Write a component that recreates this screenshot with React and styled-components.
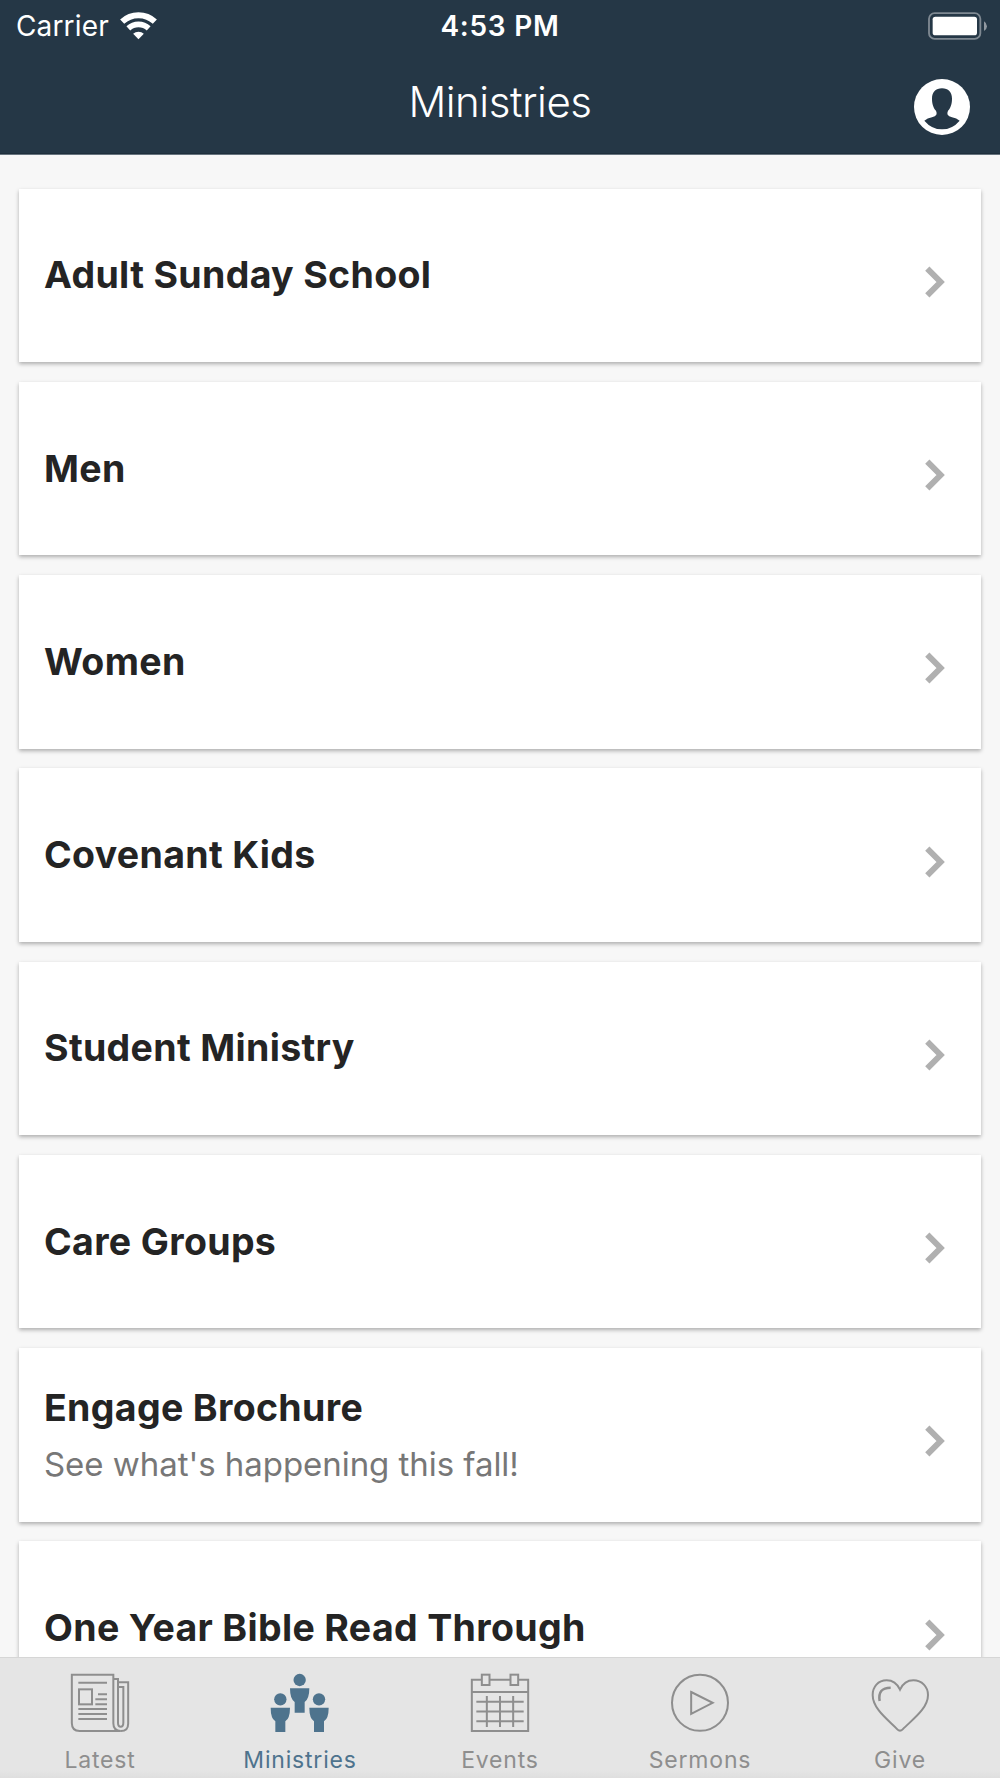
import React from 'react'
import styled, { createGlobalStyle } from 'styled-components'

const ministries = [
  { title: 'Adult Sunday School' },
  { title: 'Men' },
  { title: 'Women' },
  { title: 'Covenant Kids' },
  { title: 'Student Ministry' },
  { title: 'Care Groups' },
  { title: 'Engage Brochure', blurb: "See what's happening this fall!" },
  { title: 'One Year Bible Read Through' }
]

const WifiIcon = () => (
  <svg width="37" height="28" viewBox="-55.5 -82 111 84" fill="none" stroke="#fff">
    <path d="M-49-53A72 72 0 0 1 49-53" strokeWidth="18" />
    <path d="M-30.5-33A45 45 0 0 1 30.5-33" strokeWidth="17" />
    <path d="M0 0L-16-17A24 24 0 0 1 16-17Z" fill="#fff" stroke="none" />
  </svg>
)

const BatteryIcon = () => (
  <svg width="60" height="28" viewBox="0 0 180 84">
    <rect x="3" y="3.5" width="154" height="77" rx="17" fill="none" stroke="#7f8992" strokeWidth="5.500" />
    <rect x="14" y="14" width="133" height="56" rx="8" fill="#fff" />
    <path d="M168 28Q177 34 177 42.500T168 57Z" fill="#9199a1" />
  </svg>
)

const ProfileIcon = () => (
  <svg width="56" height="56" viewBox="0 0 168 168">
    <circle cx="84" cy="84" r="84" fill="#fff" />
    <path
      d="M84 28C65 28 54 39 54 59C54 77 60 89 66 95Q69 101 67 107Q64 112 54 115Q40 118 31 125Q53 151 84 151T137 125Q128 118 114 115Q104 112 101 107Q99 101 102 95C108 89 114 77 114 59C114 39 103 28 84 28Z"
      fill="#253746"
    />
  </svg>
)

const Chevron = () => (
  <svg width="20" height="32" viewBox="0 0 20 32" fill="none">
    <path d="M2.300 2.700L15.600 16L2.300 29.300" stroke="#b0b0b0" strokeWidth="6" />
  </svg>
)

const LatestIcon = () => (
  <svg width="60" height="60" viewBox="90 69 180 180" fill="none" stroke="currentColor" strokeWidth="6">
    <path d="M95.500 74H220V220Q220 243 242.500 243H119Q95.500 243 95.500 219Z" />
    <path d="M220 87H234V218Q234 230 242 230T250 218V111H234M234 97H264.500V221Q264.500 243 242.500 243" />
    <rect x="117" y="118" width="39" height="45" />
    <path d="M115 98H201M174 133H201M166 148H201M166 163H201M115 177H201M115 192H201M115 207H201" />
  </svg>
)

const MinistriesIcon = () => (
  <svg width="60" height="60" viewBox="120 69 180 180" fill="currentColor">
    <circle cx="209" cy="90" r="18.500" />
    <path d="M180 115H238Q238 147 224 156V188H194V156Q180 147 180 115Z" />
    <circle cx="151" cy="148" r="18.500" />
    <path d="M122 173H180Q180 205 166 214V246H136V214Q122 205 122 173Z" />
    <circle cx="267" cy="148" r="18.500" />
    <path d="M238 173H296Q296 205 282 214V246H252V214Q238 205 238 173Z" />
  </svg>
)

const EventsIcon = () => (
  <svg width="60" height="60" viewBox="90 69 180 180" fill="none" stroke="currentColor" strokeWidth="6">
    <path d="M124 89H95.500V243H264.500V89H236M149 89H211M95.500 126H264.500" />
    <rect x="125.500" y="74" width="23" height="31" />
    <rect x="211.500" y="74" width="23" height="31" />
    <path d="M109 155.500H251M109 184.500H251M109 213.500H251M140.500 138V231M180 138V231M219.500 138V231" />
  </svg>
)

const SermonsIcon = () => (
  <svg width="60" height="60" viewBox="90 69 180 180" fill="none" stroke="currentColor" strokeWidth="6">
    <circle cx="180" cy="158.500" r="84" />
    <path d="M153.500 126L218 158.500L153.500 191.500Z" />
  </svg>
)

const GiveIcon = () => (
  <svg width="60" height="60" viewBox="60 69 180 180" fill="none" stroke="currentColor" strokeWidth="6">
    <path d="M150 119C142 102 129 91 110 91C84 91 68 111 68 135C68 177 116 211 142 238Q150 246 158 238C184 211 234 177 234 135C234 111 216 91 190 91C171 91 158 102 150 119Z" />
    <path d="M89 153Q82 113 122 113" strokeWidth="7.500" />
  </svg>
)

const tabs = [
  { label: 'Latest', Icon: LatestIcon },
  { label: 'Ministries', Icon: MinistriesIcon, active: true },
  { label: 'Events', Icon: EventsIcon },
  { label: 'Sermons', Icon: SermonsIcon },
  { label: 'Give', Icon: GiveIcon }
]

export default () => (
  <Screen>
    <GlobalStyle />
    <Header>
      <StatusBar>
        <Carrier>
          Carrier
          <WifiIcon />
        </Carrier>
        <Time>4:53 PM</Time>
        <Battery><BatteryIcon /></Battery>
      </StatusBar>
      <NavBar>
        <NavTitle>Ministries</NavTitle>
        <Profile><ProfileIcon /></Profile>
      </NavBar>
    </Header>
    <List>
      {ministries.map(({ title, blurb }) => (
        <Card key={title}>
          <CardText>
            <CardTitle>{title}</CardTitle>
            {blurb && <CardBlurb>{blurb}</CardBlurb>}
          </CardText>
          <Arrow><Chevron /></Arrow>
        </Card>
      ))}
    </List>
    <TabBar>
      {tabs.map(({ label, Icon, active }) => (
        <Tab key={label} $active={active}>
          <Icon />
          <TabLabel>{label}</TabLabel>
        </Tab>
      ))}
    </TabBar>
  </Screen>
)

/***************************** Styled Components *****************************/

const GlobalStyle = createGlobalStyle`
  * {
    box-sizing: border-box;
  }
  body {
    margin: 0;
    font-family: Inter, "Liberation Sans", sans-serif;
  }
  svg {
    display: block;
    flex: none;
  }
`

const Screen = styled.div`
  display: flex;
  flex-direction: column;
  width: 1000px;
  height: 1778px;
  overflow: hidden;
  background: #f7f7f7;
`

const Header = styled.header`
  flex: 0 0 155px;
  color: #fff;
  background: #253746;
  border-bottom: 1px solid #66737e;
  box-shadow: inset 0 -1px 0 #1f2f3c;
`

const StatusBar = styled.div`
  display: grid;
  grid-template-columns: 1fr auto 1fr;
  align-items: center;
  height: 51px;
  padding: 0 12px;
  font-size: 28px;
`

const Carrier = styled.div`
  display: flex;
  align-items: center;
  gap: 11px;
  padding-left: 4px;
  letter-spacing: 0.15px;
`

const Time = styled.div`
  font-weight: 600;
  letter-spacing: 0.75px;
`

const Battery = styled.div`
  justify-self: end;
`

const NavBar = styled.div`
  display: grid;
  grid-template-columns: 1fr auto 1fr;
  height: 103px;
  padding: 0 30px;
`

const NavTitle = styled.h1`
  grid-column: 2;
  margin: 0;
  font-size: 42px;
  font-weight: 300;
  line-height: 101px;
  letter-spacing: -0.45px;
`

const Profile = styled.div`
  justify-self: end;
  padding-top: 27.500px;
`

const List = styled.main`
  flex: 1 1 0;
  display: flex;
  flex-direction: column;
  gap: 19.600px;
  min-height: 0;
  padding: 33.600px 19px 0 19px;
  overflow: hidden;
`

const Card = styled.article`
  flex: 0 0 173.650px;
  display: flex;
  align-items: center;
  justify-content: space-between;
  padding: 0 36.500px 0 25px;
  background: #fff;
  box-shadow: 0 2px 4px rgba(0, 0, 0, 0.3);
`

const CardText = styled.div`
  display: flex;
  flex-direction: column;
  gap: 13px;
`

const CardTitle = styled.h2`
  margin: 0;
  font-size: 37.500px;
  font-weight: 700;
  line-height: 46px;
  letter-spacing: 0.33px;
  color: #242424;
`

const CardBlurb = styled.p`
  margin: 0;
  font-size: 33px;
  line-height: 40px;
  letter-spacing: -0.05px;
  color: #777;
`

const Arrow = styled.div`
  padding-top: 13px;
`

const TabBar = styled.nav`
  flex: 0 0 121px;
  display: grid;
  grid-template-columns: repeat(5, 1fr);
  background: linear-gradient(#e5e5e5 112px, #dedede 121px);
  border-top: 1px solid #d6d6d6;
`

const Tab = styled.div`
  display: flex;
  flex-direction: column;
  align-items: center;
  padding-top: 15px;
  color: ${props => props.$active ? '#4e738d' : '#8e8e8e'};
`

const TabLabel = styled.span`
  margin-top: 13px;
  font-size: 23px;
  line-height: 28px;
  letter-spacing: 0.8px;
`
